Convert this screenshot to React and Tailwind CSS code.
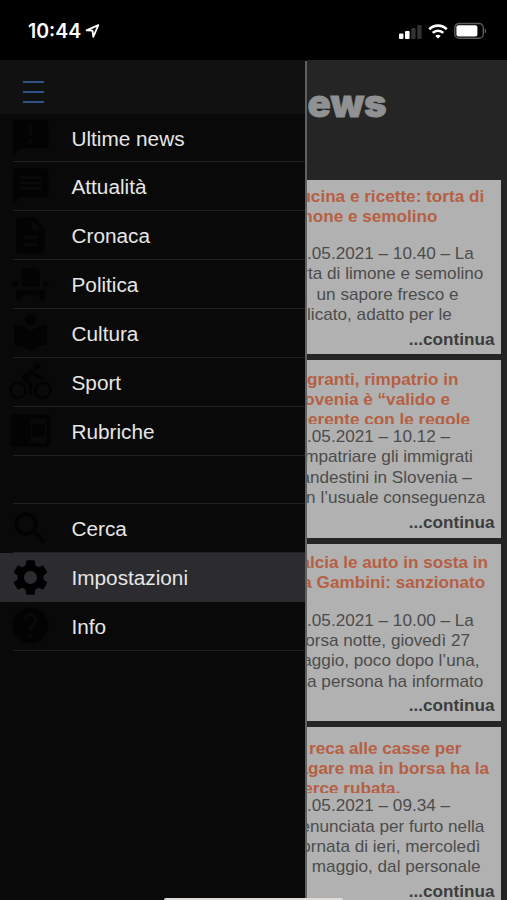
import React from 'react';
import {
  MdAnnouncement,
  MdMessage,
  MdDescription,
  MdEventSeat,
  MdLocalLibrary,
  MdDirectionsBike,
  MdSearch,
  MdSettings,
  MdHelp
} from 'react-icons/md';

const ReaderIcon = ({ className }) => (
  <svg className={className} viewBox="0 0 24 24" fill="currentColor">
    <path fillRule="evenodd" d="M2.5 3h19A1.5 1.5 0 0 1 23 4.5v15a1.5 1.5 0 0 1-1.5 1.5h-19A1.5 1.5 0 0 1 1 19.5v-15A1.5 1.5 0 0 1 2.5 3zM12 5.5V19h9V5.5z" />
    <path d="M13 8.5h7v7h-7z" />
  </svg>
);

const menuItems = [
  { id: 'ultime', label: 'Ultime news', icon: MdAnnouncement },
  { id: 'attualita', label: 'Attualità', icon: MdMessage },
  { id: 'cronaca', label: 'Cronaca', icon: MdDescription },
  { id: 'politica', label: 'Politica', icon: MdEventSeat },
  { id: 'cultura', label: 'Cultura', icon: MdLocalLibrary },
  { id: 'sport', label: 'Sport', icon: MdDirectionsBike },
  { id: 'rubriche', label: 'Rubriche', icon: ReaderIcon },
  { id: 'spacer' },
  { id: 'cerca', label: 'Cerca', icon: MdSearch },
  { id: 'impostazioni', label: 'Impostazioni', icon: MdSettings, active: true },
  { id: 'info', label: 'Info', icon: MdHelp }
];

const articles = [
  {
    id: 1,
    box: 'h-[174px] pt-[5.7px]',
    title: ['Cucina e ricette: torta di', 'limone e semolino'],
    body: ['27.05.2021 – 10.40 – La', 'torta di limone e semolino', 'dà  un sapore fresco e', 'delicato, adatto per le']
  },
  {
    id: 2,
    box: 'h-[177.5px] pt-[8.7px]',
    title: ['Migranti, rimpatrio in', 'Slovenia è “valido e', 'coerente con le regole'],
    body: ['27.05.2021 – 10.12 –', 'Rimpatriare gli immigrati', 'clandestini in Slovenia –', 'con l’usuale conseguenza']
  },
  {
    id: 3,
    box: 'h-[177.5px] pt-[8.7px]',
    title: ['Calcia le auto in sosta in', 'via Gambini: sanzionato'],
    body: ['27.05.2021 – 10.00 – La', 'scorsa notte, giovedì 27', 'maggio, poco dopo l’una,', 'una persona ha informato']
  },
  {
    id: 4,
    box: 'h-[180px] pt-[10.9px]',
    title: ['Si reca alle casse per', 'pagare ma in borsa ha la', 'merce rubata.'],
    body: ['27.05.2021 – 09.34 –', 'Denunciata per furto nella', 'giornata di ieri, mercoledì', '26 maggio, dal personale']
  }
];

const StatusBar = () => (
  <div className="flex h-[60px] shrink-0 items-start justify-between bg-black pr-[20px] pl-[28px] text-white">
    <div className="flex items-center pt-[17px]">
      <span className="font-[Inter] text-[19.5px] leading-[28px] font-semibold">10:44</span>
      <svg className="ml-[4px] h-[14px] w-[15px]" viewBox="0 0 15 14" fill="none" stroke="currentColor" strokeWidth="1.8" strokeLinejoin="round">
        <path d="M13.3 1.2 1.6 6.3l5.9.4.8 6.1z" />
      </svg>
    </div>
    <div className="flex items-center gap-[6px] pt-[22px]">
      <svg className="h-[16px] w-[24px]" viewBox="0 0 24 16" fill="currentColor">
        <rect x="1" y="10.5" width="4.4" height="5.5" rx="1" />
        <rect x="7" y="8" width="4.6" height="8" rx="1" />
        <rect x="13.2" y="5" width="4.4" height="11" rx="1" fill="#333" />
        <rect x="19.2" y="2" width="4.4" height="14" rx="1" fill="#333" />
      </svg>
      <svg className="h-[16px] w-[20px]" viewBox="0 0 20 16" fill="none" stroke="currentColor" strokeWidth="2.7">
        <path d="M1.3 6.2a12.4 12.4 0 0 1 17.4 0" />
        <path d="M4.7 9.9a7.6 7.6 0 0 1 10.6 0" />
        <path d="M10 15.6 7.3 12.9a3.7 3.7 0 0 1 5.4 0z" fill="currentColor" stroke="none" />
      </svg>
      <svg className="h-[17px] w-[33px]" viewBox="0 0 33 17">
        <rect x="0.8" y="1.5" width="28.5" height="14.8" rx="4.2" fill="none" stroke="#5a5a5a" strokeWidth="1.4" />
        <rect x="2.4" y="3.3" width="21" height="11.2" rx="2" fill="#fff" />
        <path d="M30.7 6.5c2 .4 2 4.4 0 4.8z" fill="#5a5a5a" />
      </svg>
    </div>
  </div>
);

const MenuItem = ({ label, icon: Icon, active }) => (
  <li className={active ? 'h-[48.85px] bg-[#2c2b30]' : 'h-[48.85px]'}>
    <div className={`ml-[13px] flex h-full items-center border-b ${active ? 'border-[#2c2b30]' : 'border-[#212121]'}`}>
      {Icon && <Icon className={`-ml-[4.5px] size-[43px] shrink-0 ${active ? 'text-black' : 'text-[#030303]'}`} />}
      <span className="ml-[20px] pt-[2px] text-[20.75px] leading-[24px] text-[#e6e6e6]">{label}</span>
    </div>
  </li>
);

const Drawer = () => (
  <nav className="flex w-[304.5px] shrink-0 flex-col bg-[#090909]">
    <div className="h-[53.6px] shrink-0 bg-[#111111] pt-[21px] pl-[22.5px]">
      <button className="flex flex-col gap-[8px]" aria-label="Menu">
        <span className="h-[2px] w-[21.5px] bg-[#2f5388]" />
        <span className="h-[2px] w-[21.5px] bg-[#2f5388]" />
        <span className="h-[2px] w-[21.5px] bg-[#2f5388]" />
      </button>
    </div>
    <ul>
      {menuItems.map(item => (
        <MenuItem key={item.id} {...item} />
      ))}
    </ul>
  </nav>
);

const Article = ({ box, title, body }) => (
  <article className={`shrink-0 bg-[#b1b1b1] pl-[10.5px] text-[17.15px] leading-[20.3px] whitespace-nowrap ${box}`}>
    <h2 className="mb-[2.5px] h-[55px] overflow-hidden font-bold text-[#b65f43]">
      {title.map(line => (
        <span key={line} className="block">{line}</span>
      ))}
    </h2>
    <p className="text-[#4c4c4c]">
      {body.map(line => (
        <span key={line} className="block whitespace-pre">{line}</span>
      ))}
    </p>
    <div className="mt-[4.5px] pr-[6.5px] text-right font-bold text-[#3c3c3c]">...continua</div>
  </article>
);

const App = () => (
  <div className="relative flex h-[900px] w-[507px] flex-col overflow-hidden bg-black font-['Liberation_Sans',Arial,sans-serif]">
    <StatusBar />
    <div className="flex min-h-0 flex-1">
      <Drawer />
      <div className="mt-[1px] w-[2px] shrink-0 bg-[#606060]" />
      <main className="min-w-0 flex-1 overflow-hidden bg-[#252525]">
        <div className="-ml-[29px] flex flex-col gap-[6px] pr-[6px]">
          <h1 className="mb-[-6px] h-[120px] pt-[19px] pl-[0.5px] font-[Inter] text-[38.5px] leading-[48px] font-black tracking-[-0.1px] text-[#8f9192] [-webkit-text-stroke:0.8px_#8f9192]">
            News
          </h1>
          {articles.map(article => (
            <Article key={article.id} {...article} />
          ))}
        </div>
      </main>
    </div>
    <div className="absolute bottom-0 left-[164px] h-[2px] w-[179px] rounded-t bg-[#dedbdb]" />
  </div>
);

export default App;
